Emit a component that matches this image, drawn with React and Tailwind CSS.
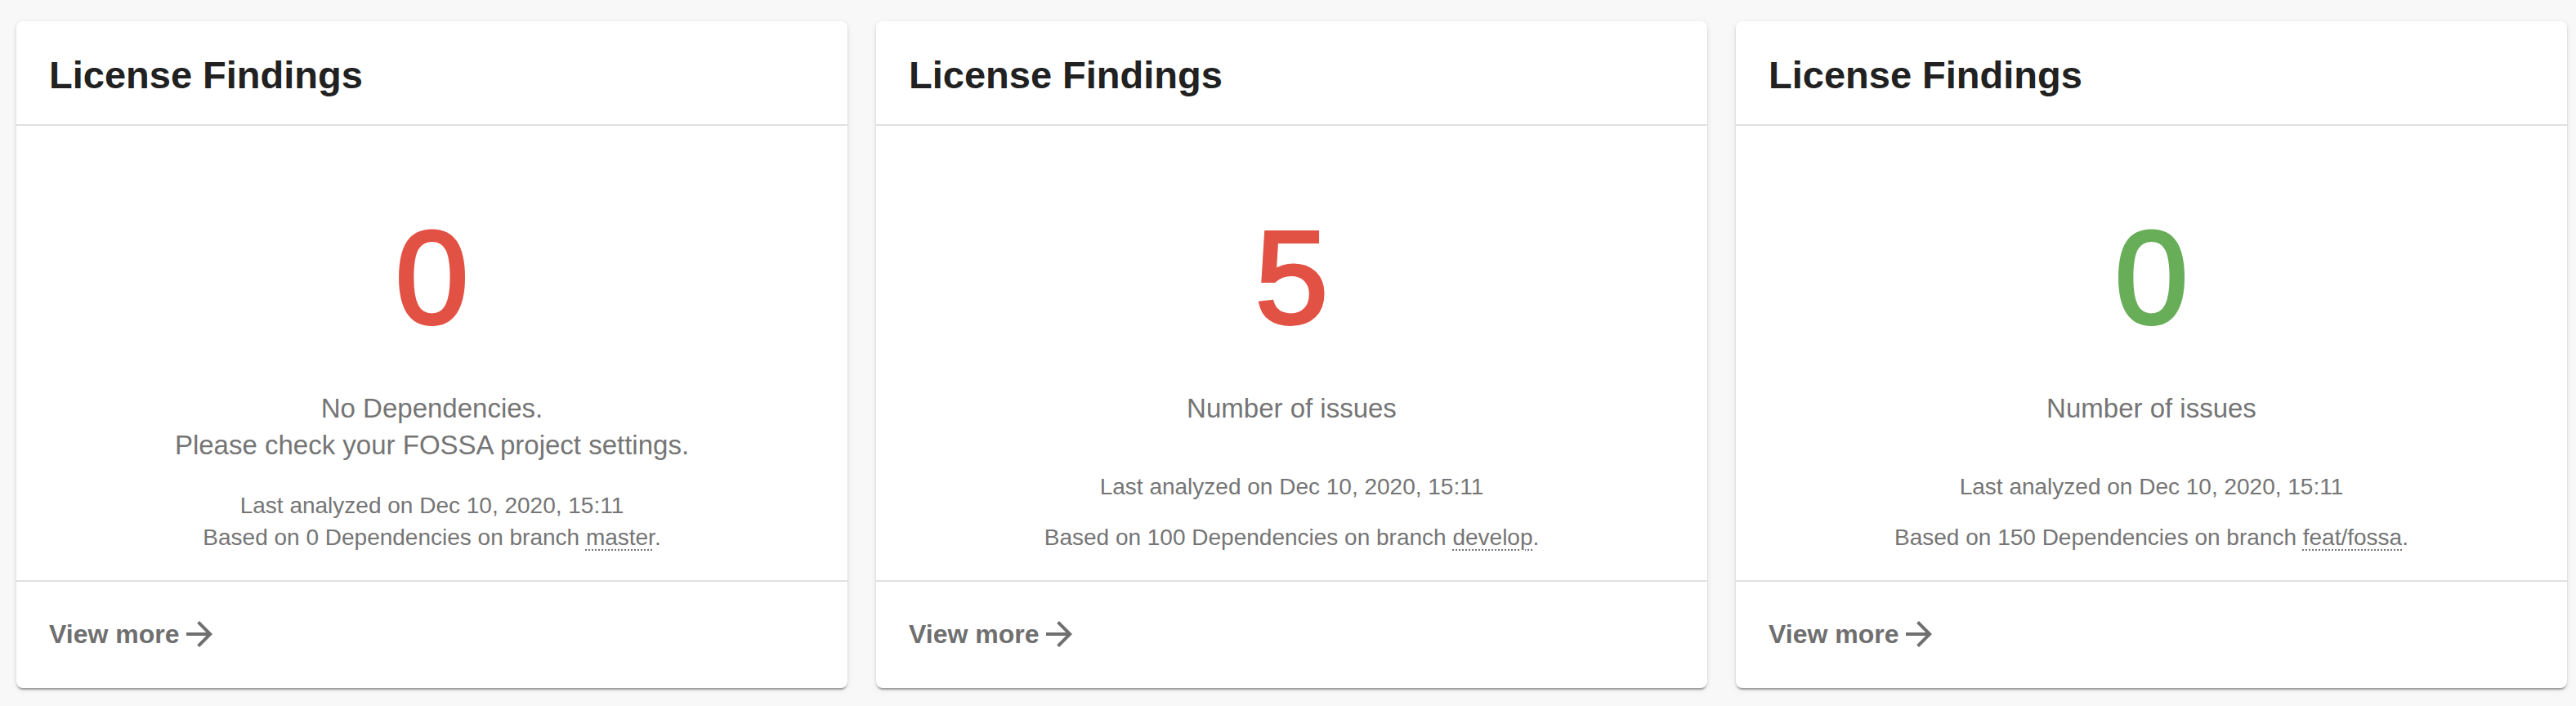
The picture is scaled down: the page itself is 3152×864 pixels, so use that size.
import React from "react";

function ArrowForward() {
  return (
    <svg width="48" height="48" viewBox="0 0 24 24" className="shrink-0" fill="currentColor">
      <path d="M12 4l-1.41 1.41L16.17 11H4v2h12.17l-5.58 5.59L12 20l8-8z" />
    </svg>
  );
}

function Card({ children }) {
  return (
    <div className="flex flex-col h-[816px] bg-white rounded-[8px] shadow-[0_4px_2px_-2px_rgba(0,0,0,0.2),0_2px_2px_0_rgba(0,0,0,0.14),0_2px_6px_0_rgba(0,0,0,0.12)] overflow-hidden">
      <div className="h-[128px] px-[40px] pt-[42px] border-b-2 border-[#e0e0e0]">
        <h2 className="text-[47px] leading-[47px] font-bold text-[#212121]">License Findings</h2>
      </div>
      <div className="h-[556px] flex flex-col items-center pt-[105px] text-[#757575] text-center">
        {children}
      </div>
      <div className="h-[130px] border-t-2 border-[#e0e0e0] flex items-center px-[40px] text-[#6f6f6f]">
        <span className="text-[32px] leading-none font-bold">View more</span>
        <span className="ml-[1px]">
          <ArrowForward />
        </span>
      </div>
    </div>
  );
}

function Branch({ name }) {
  return <span className="underline decoration-dotted decoration-[1.5px] underline-offset-[5px]">{name}</span>;
}

export default function App() {
  return (
    <div className="min-h-[864px] bg-[#f8f8f8] pt-[26px] pl-[20px] font-['Liberation_Sans',Arial,sans-serif]">
      <div className="grid grid-cols-[repeat(3,1017px)] gap-x-[35px]">
        <Card>
          <div className="text-[161px] leading-[160px] text-[#e25244] [-webkit-text-stroke:4px_#e25244]">0</div>
          <p className="mt-[58px] text-[33px] leading-[45px]">
            No Dependencies.
            <br />
            Please check your FOSSA project settings.
          </p>
          <p className="mt-[32px] text-[28px] leading-[39px]">
            Last analyzed on Dec 10, 2020, 15:11
            <br />
            Based on 0 Dependencies on branch <Branch name="master" />.
          </p>
        </Card>
        <Card>
          <div className="text-[161px] leading-[160px] text-[#e25244] [-webkit-text-stroke:4px_#e25244]">5</div>
          <p className="mt-[58px] text-[33px] leading-[45px]">Number of issues</p>
          <p className="mt-[54px] text-[28px] leading-[40px]">Last analyzed on Dec 10, 2020, 15:11</p>
          <p className="mt-[22px] text-[28px] leading-[40px]">
            Based on 100 Dependencies on branch <Branch name="develop" />.
          </p>
        </Card>
        <Card>
          <div className="text-[161px] leading-[160px] text-[#68ad58] [-webkit-text-stroke:4px_#68ad58]">0</div>
          <p className="mt-[58px] text-[33px] leading-[45px]">Number of issues</p>
          <p className="mt-[54px] text-[28px] leading-[40px]">Last analyzed on Dec 10, 2020, 15:11</p>
          <p className="mt-[22px] text-[28px] leading-[40px]">
            Based on 150 Dependencies on branch <Branch name="feat/fossa" />.
          </p>
        </Card>
      </div>
    </div>
  );
}
